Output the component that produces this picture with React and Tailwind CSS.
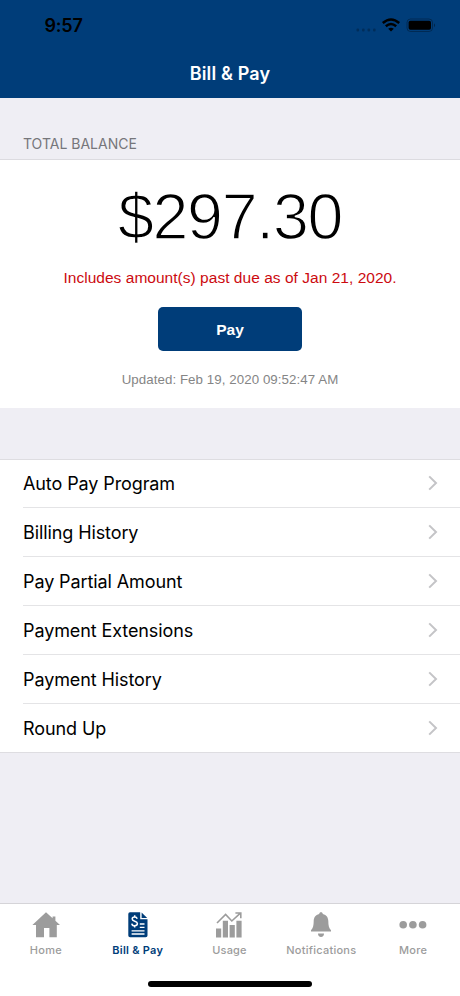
import React from "react";

const menuItems = [
  "Auto Pay Program",
  "Billing History",
  "Pay Partial Amount",
  "Payment Extensions",
  "Payment History",
  "Round Up",
];

const HomeIcon = () => (
  <svg width="28" height="26" viewBox="0 0 28 26" fill="currentColor">
    <path d="M14 0.2 L20.6 6.2 V4.6 H23.4 V8.8 L28 13.1 H24.8 V25.2 H17.4 V16 H12 V25.2 H4 V13.1 H0.4 Z" />
  </svg>
);

const BillIcon = () => (
  <svg width="20" height="26" viewBox="0 0 20 26" fill="none">
    <path d="M2 0.2 H12.2 V7.2 H19.5 V23.5 Q19.5 25.3 17.7 25.3 H2 Q0.3 25.3 0.3 23.5 V2 Q0.3 0.2 2 0.2 Z" fill="currentColor" />
    <path d="M13.6 0.4 L19.2 6 H13.6 Z" fill="currentColor" />
    <path d="M9.2 6.8 C8.8 5.4 7.8 5 6.6 5 C5 5 4.2 5.9 4.2 7 C4.2 9.8 9.4 8.6 9.4 11.6 C9.4 13 8.2 13.8 6.7 13.8 C5.1 13.8 4 13 3.8 11.6 M6.7 3.2 V5 M6.7 13.8 V15.6" stroke="#fff" strokeWidth="1.5" />
    <path d="M11.8 12 H16.5 M11.8 15.4 H16.5 M3.6 18.8 H16.5 M3.6 22 H16.5" stroke="#fff" strokeWidth="1.3" />
  </svg>
);

const UsageIcon = () => (
  <svg width="26" height="26" viewBox="0 0 26 26" fill="currentColor">
    <path d="M0 16.5 H5.2 V25.5 H0 Z M6.8 8.8 H12 V25.5 H6.8 Z M13.6 13 H18.8 V25.5 H13.6 Z M20.4 8.8 H25.6 V25.5 H20.4 Z" />
    <path d="M1 11 L9.6 2.4 L15.8 9 L24.4 1.2 M19.4 1 H24.8 V6.2" fill="none" stroke="currentColor" strokeWidth="1.6" />
  </svg>
);

const BellIcon = () => (
  <svg width="22" height="26" viewBox="0 0 22 26" fill="currentColor">
    <path d="M11 0.2 C12 0.2 12.7 0.9 12.8 1.9 C16.6 2.8 18.2 5.6 18.3 9 C18.4 13.6 18.8 16 21 18.2 V19.6 H1 V18.2 C3.2 16 3.6 13.6 3.7 9 C3.8 5.6 5.4 2.8 9.2 1.9 C9.3 0.9 10 0.2 11 0.2 Z" />
    <path d="M8 21.6 H14 C14 23.8 12.8 25 11 25 C9.2 25 8 23.8 8 21.6 Z" />
  </svg>
);

const MoreIcon = () => (
  <svg width="28" height="26" viewBox="0 0 28 26" fill="currentColor">
    <circle cx="4.2" cy="12.8" r="3.8" />
    <circle cx="13.9" cy="12.8" r="3.8" />
    <circle cx="23.6" cy="12.8" r="3.8" />
  </svg>
);

const tabs = [
  { label: "Home", icon: HomeIcon, spacing: "tracking-[0.35px]" },
  { label: "Bill & Pay", icon: BillIcon, active: true, spacing: "tracking-[0.25px]" },
  { label: "Usage", icon: UsageIcon, spacing: "tracking-[0.2px]" },
  { label: "Notifications", icon: BellIcon, spacing: "tracking-[0.25px]" },
  { label: "More", icon: MoreIcon, spacing: "tracking-[0.2px]" },
];

function StatusIcons() {
  return (
    <svg width="82" height="16" viewBox="0 0 82 16" className="mt-[17px]">
      <g fill="#000" opacity="0.25">
        <rect x="0.5" y="11.5" width="2.6" height="3" rx="1" />
        <rect x="6" y="11.5" width="2.6" height="3" rx="1" />
        <rect x="11.5" y="11.5" width="2.6" height="3" rx="1" />
        <rect x="17" y="11.5" width="2.6" height="3" rx="1" />
      </g>
      <g fill="none" stroke="#000" strokeWidth="2.5">
        <path d="M26.8 6 Q35 -1 43.2 6" />
        <path d="M29.8 9.2 Q35 4.8 40.2 9.2" />
      </g>
      <path d="M32.2 11.8 Q35 9.8 37.8 11.8 L35 14.6 Z" />
      <rect x="51" y="2" width="25.5" height="12.5" rx="3.5" fill="none" stroke="#000" strokeOpacity="0.3" />
      <rect x="52.6" y="3.8" width="22.4" height="9" rx="1.8" />
      <path d="M78 6.3 Q80.2 8.2 78 10.2 Z" opacity="0.4" />
    </svg>
  );
}

export default function App() {
  return (
    <div className="flex h-[996px] w-[460px] flex-col overflow-hidden bg-[#efeef4] font-['Inter',sans-serif]">
      {/* Header */}
      <header className="h-[98px] shrink-0 bg-[#003d79]">
        <div className="flex h-[50px] justify-between pl-[44.5px] pr-[22px]">
          <span className="mt-[14px] text-[18px] leading-6 font-semibold tracking-[-0.2px] text-black">9:57</span>
          <StatusIcons />
        </div>
        <h1 className="text-center text-[18px] leading-[48px] font-semibold tracking-[0.15px] text-white">Bill &amp; Pay</h1>
      </header>

      {/* Balance */}
      <h2 className="h-[62px] shrink-0 border-b border-[#dcdbe0] pt-[36px] pl-[23px] text-[14px] leading-5 text-[#76767b]">
        TOTAL BALANCE
      </h2>
      <section className="flex h-[248px] shrink-0 flex-col items-center bg-white">
        {/* white outline slims the digits down to a light weight */}
        <p className="mt-[19px] font-['Liberation_Sans',sans-serif] text-[64.5px] leading-[76px] tracking-[-1.3px] text-black [-webkit-text-stroke:1.5px_white]">
          $297.30
        </p>
        <p className="mt-[13px] font-['Liberation_Sans',sans-serif] text-[15.5px] leading-5 tracking-[0.03px] text-[#cc0a0f]">
          Includes amount(s) past due as of Jan 21, 2020.
        </p>
        <button className="mt-[19px] h-[44px] w-[144px] rounded-[5px] bg-[#003d79] pt-px font-['Liberation_Sans',sans-serif] text-[15.5px] font-bold text-white">
          Pay
        </button>
        <p className="mt-[19px] font-['Liberation_Sans',sans-serif] text-[13.3px] leading-5 tracking-[0.07px] text-[#858585]">
          Updated: Feb 19, 2020 09:52:47 AM
        </p>
      </section>

      {/* Menu */}
      <ul className="mt-[51px] shrink-0 border-y border-[#dedde1] bg-white">
        {menuItems.map((item) => (
          <li
            key={item}
            className="ml-[23px] flex h-[49px] items-center justify-between border-b border-[#e4e4e6] pr-[22px] first:h-[48px] last:h-[48px] last:border-b-0"
          >
            <span className="text-[18px] tracking-[-0.1px] text-black">{item}</span>
            <svg width="10" height="16" viewBox="0 0 10 16" fill="none" stroke="#c4c4c7" strokeWidth="2" className="mb-px">
              <path d="M1.2 1.4 L8 8 L1.2 14.6" />
            </svg>
          </li>
        ))}
      </ul>

      {/* Tab bar */}
      <nav className="mt-auto h-[93px] shrink-0 border-t border-[#d5d4d8] bg-white">
        <div className="mr-px grid h-[77px] grid-cols-5">
          {tabs.map(({ label, icon: Icon, active, spacing }) => (
            <div key={label} className={`flex flex-col items-center pt-[8px] ${active ? "text-[#003d79]" : "text-[#9c9c9c]"}`}>
              <Icon />
              <span className={`mt-[4px] text-[11px] leading-4 whitespace-nowrap ${active ? "font-semibold" : "font-medium"} ${spacing}`}>
                {label}
              </span>
            </div>
          ))}
        </div>
        <div className="mx-auto h-[6px] w-[164px] rounded-full bg-black" />
      </nav>
    </div>
  );
}
